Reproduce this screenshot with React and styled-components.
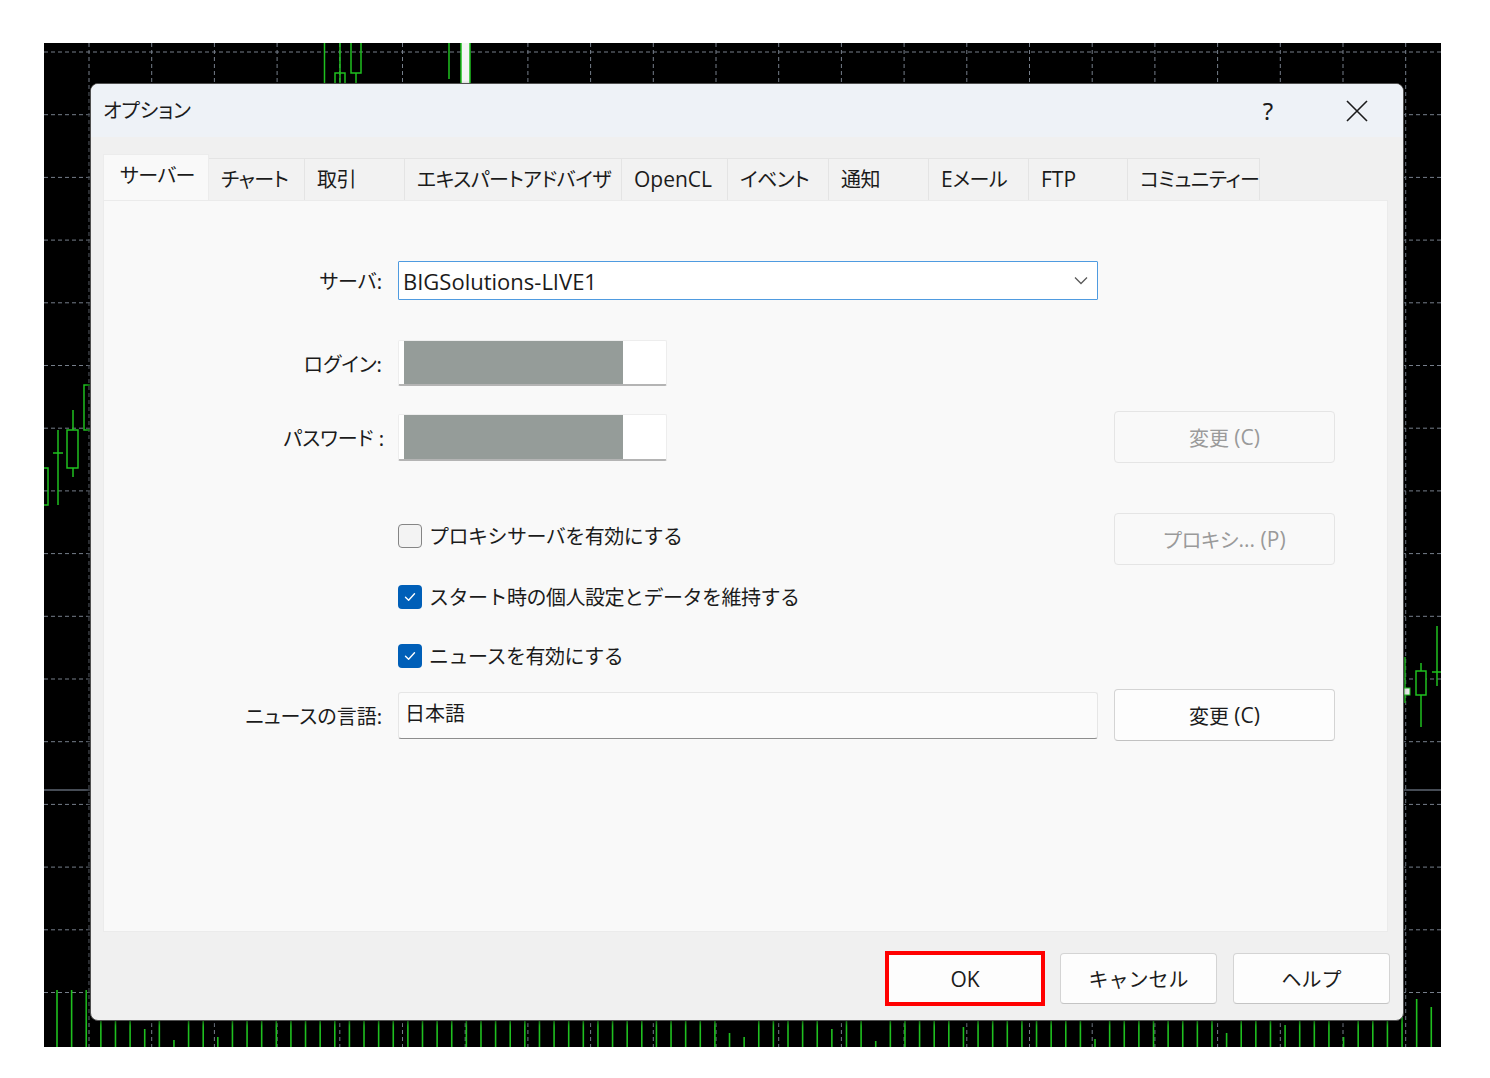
import React from "react";
import styled, { createGlobalStyle } from "styled-components";

const GlobalStyle = createGlobalStyle`
  html, body { margin: 0; padding: 0; background: #ffffff; }
  body { font-family: "Noto Sans", "Noto Sans CJK JP", sans-serif; color: #1b1b1b; }
  * { box-sizing: border-box; }
`;

const Page = styled.div`
  width: 1490px;
  height: 1078px;
  padding: 43px 0 0 44px;
`;

const Stage = styled.div`
  display: grid;
  width: 1397px;
  height: 1004px;
  background: #000;
  & > * { grid-area: 1 / 1; }
`;

const ChartSvg = styled.svg`
  display: block;
  width: 1397px;
  height: 1004px;
`;

const Dialog = styled.div`
  margin: 40px 37px 26px 46px;
  display: flex;
  flex-direction: column;
  background: #f0f0f0;
  border: 1px solid #505050;
  border-radius: 8px;
  overflow: hidden;
  box-shadow: -1px 2px 4px rgba(0, 0, 0, 0.6);
`;

const Latin = styled.span`
  font-family: "Open Sans", "Noto Sans", sans-serif;
  font-size: ${(p) => p.$size || 21}px;
  letter-spacing: 0;
`;

const TitleBar = styled.div`
  height: 53px;
  flex: none;
  display: flex;
  align-items: center;
  justify-content: space-between;
  padding: 0 23px 0 12px;
  background: #eef2f7;
`;

const Title = styled.div`
  font-size: 20px;
  font-feature-settings: "palt";
  color: #1b1b1b;
  margin-top: -2px;
`;

const TitleControls = styled.div`
  display: flex;
  align-items: center;
  gap: 43px;
`;

const TitleButton = styled.div`
  width: 46px;
  height: 40px;
  display: flex;
  align-items: center;
  justify-content: center;
  font-size: 24px;
  color: #1b1b1b;
`;

const Body = styled.div`
  flex: 1;
  display: flex;
  flex-direction: column;
  padding: 17px 15px 0 12px;
`;

const TabStrip = styled.div`
  display: flex;
  align-items: flex-end;
  height: 46px;
  flex: none;
`;

const Tab = styled.div`
  width: ${(p) => p.$w}px;
  height: ${(p) => (p.$active ? 46 : 42)}px;
  padding: ${(p) => (p.$active ? "0 0 6px 16px" : "0 0 2px 12px")};
  display: flex;
  align-items: center;
  font-size: 20px;
  font-feature-settings: "palt";
  letter-spacing: -0.5px;
  white-space: nowrap;
  color: #1b1b1b;
  background: ${(p) => (p.$active ? "#f9f9f9" : "#f2f2f2")};
  border: 1px solid ${(p) => (p.$active ? "#ececec" : "#e4e4e4")};
  border-bottom: none;
  margin-left: ${(p) => (p.$first ? 0 : -1)}px;
  position: relative;
  z-index: ${(p) => (p.$active ? 1 : 0)};
`;

const Panel = styled.div`
  height: 732px;
  flex: none;
  background: #f9f9f9;
  border: 1px solid #ebebeb;
  padding-top: 60px;
  display: flex;
  flex-direction: column;
`;

const Row = styled.div`
  display: grid;
  grid-template-columns: 278px 700px 221px;
  column-gap: 16px;
  align-items: center;
  height: ${(p) => p.$h}px;
  margin-top: ${(p) => p.$mt}px;
`;

const Label = styled.div`
  font-size: 20px;
  text-align: right;
  font-feature-settings: "palt";
  color: #1b1b1b;
  white-space: nowrap;
  margin-right: ${(p) => p.$mr || 0}px;
`;

const Combo = styled.div`
  height: 39px;
  display: flex;
  align-items: center;
  justify-content: space-between;
  padding: 0 9px 0 4px;
  background: #ffffff;
  border: 1px solid #4f9be0;
  border-radius: 1px;
`;

const MaskedField = styled.div`
  width: 269px;
  height: ${(p) => p.$h}px;
  display: flex;
  background: #ffffff;
  border: 1px solid #ededed;
  border-bottom: 2px solid #b4b4b4;
  border-radius: 2px;
  padding-left: 5px;
`;

const Redaction = styled.div`
  width: 219px;
  height: 100%;
  background: #959c99;
`;

const TextField = styled.div`
  height: 47px;
  display: flex;
  align-items: center;
  padding: 0 0 5px 6px;
  background: #fbfbfb;
  border: 1px solid #e6e6e6;
  border-bottom: 1px solid #8d8d8d;
  border-radius: 3px;
  font-size: 20px;
`;

const SideButton = styled.div`
  height: 52px;
  display: flex;
  align-items: center;
  justify-content: center;
  white-space: pre;
  font-size: 20px;
  font-feature-settings: "palt";
  border-radius: 4px;
  color: ${(p) => (p.$disabled ? "#9a9a9a" : "#1b1b1b")};
  background: ${(p) => (p.$disabled ? "#f9f9f9" : "#fdfdfd")};
  border: 1px solid ${(p) => (p.$disabled ? "#e5e5e5" : "#d4d4d4")};
  border-bottom-color: ${(p) => (p.$disabled ? "#e5e5e5" : "#c2c2c2")};
`;

const CheckLine = styled.div`
  display: flex;
  align-items: center;
  gap: 7px;
  font-size: 20px;
  letter-spacing: -0.5px;
  white-space: nowrap;
  align-self: ${(p) => (p.$top ? "start" : "center")};
  margin-top: ${(p) => p.$top || 0}px;
`;

const Box = styled.div`
  width: 24px;
  height: 24px;
  flex: none;
  border-radius: 4px;
  display: flex;
  align-items: center;
  justify-content: center;
  background: ${(p) => (p.$checked ? "#005fb8" : "#f3f3f3")};
  border: ${(p) => (p.$checked ? "none" : "1.5px solid #858585")};
`;

const Footer = styled.div`
  display: flex;
  justify-content: flex-end;
  align-items: center;
  gap: 15px;
  padding-top: 19px;
  margin-right: -2px;
`;

const DialogButton = styled.div`
  width: ${(p) => (p.$highlight ? 160 : 157)}px;
  height: ${(p) => (p.$highlight ? 55 : 51)}px;
  display: flex;
  align-items: center;
  justify-content: center;
  font-size: 20px;
  color: #1b1b1b;
  background: #fdfdfd;
  border: ${(p) => (p.$highlight ? "4px solid #ff0000" : "1px solid #d4d4d4")};
  border-bottom-color: ${(p) => (p.$highlight ? "#ff0000" : "#c4c4c4")};
  border-radius: ${(p) => (p.$highlight ? 0 : 4)}px;
  margin-left: ${(p) => p.$ml || 0}px;
`;

const Check = () => (
  <svg width="14" height="14" viewBox="0 0 14 14">
    <path d="M2.5 7.3 L5.6 10.2 L11.5 3.8" fill="none" stroke="#fff" strokeWidth="1.4" strokeLinecap="round" strokeLinejoin="round" />
  </svg>
);

const Chevron = () => (
  <svg width="14" height="9" viewBox="0 0 14 9">
    <path d="M1 1.5 L7 7.5 L13 1.5" fill="none" stroke="#5a5a5a" strokeWidth="1.3" />
  </svg>
);

const CloseIcon = () => (
  <svg width="22" height="22" viewBox="0 0 22 22">
    <path d="M1 1 L21 21 M21 1 L1 21" stroke="#1b1b1b" strokeWidth="1.6" />
  </svg>
);

const GREEN = "#1fc01f";
const GRID = "#767e8a";

const volHeights = (() => {
  const arr = [];
  const shortSet = { 6: 18, 8: 7, 11: 10, 46: 14, 47: 10, 53: 18, 56: 6, 62: 20, 71: 8, 80: 14, 84: 22, 88: 10 };
  for (let k = 0; k < 95; k++) {
    let h = 40;
    if (k < 3) h = 57;
    if (k === 92) h = 62;
    if (k === 93) h = 48;
    if (shortSet[k]) h = shortSet[k];
    arr.push(h);
  }
  return arr;
})();

function Chart() {
  const hLines = [];
  for (let n = 0; n < 16; n++) hLines.push(9 + 62.7 * n);
  const vLines = [];
  for (let n = 0; n < 22; n++) vLines.push(45 + 62.7 * n);
  return (
    <ChartSvg viewBox="0 0 1397 1004">
      {hLines.map((y) => (
        <line key={"h" + y} x1="0" x2="1397" y1={y} y2={y} stroke={GRID} strokeWidth="1" strokeDasharray="4 3" />
      ))}
      {vLines.map((x) => (
        <line key={"v" + x} x1={x} x2={x} y1="0" y2="1004" stroke={GRID} strokeWidth="1" strokeDasharray="4 3" />
      ))}
      <line x1="0" x2="1397" y1="747" y2="747" stroke="#5e6672" strokeWidth="1.5" />

      <line x1="280.5" x2="280.5" y1="0" y2="40" stroke={GREEN} strokeWidth="1.5" />
      <line x1="296" x2="296" y1="0" y2="40" stroke={GREEN} strokeWidth="1.5" />
      <rect x="291" y="30" width="10" height="12" fill="none" stroke={GREEN} strokeWidth="1.5" />
      <line x1="312" x2="312" y1="30" y2="40" stroke={GREEN} strokeWidth="1.5" />
      <rect x="307" y="-2" width="10" height="32" fill="none" stroke={GREEN} strokeWidth="1.5" />
      <line x1="405" x2="405" y1="0" y2="36" stroke={GREEN} strokeWidth="1.5" />
      <rect x="417" y="-2" width="9" height="44" fill="#f4f4f4" stroke={GREEN} strokeWidth="1.5" />

      <rect x="-2" y="425" width="6" height="37" fill="none" stroke={GREEN} strokeWidth="1.5" />
      <line x1="14" x2="14" y1="387" y2="462" stroke={GREEN} strokeWidth="1.5" />
      <line x1="9" x2="19" y1="410" y2="410" stroke={GREEN} strokeWidth="1.5" />
      <line x1="29" x2="29" y1="367" y2="434" stroke={GREEN} strokeWidth="1.5" />
      <rect x="23" y="387" width="11" height="38" fill="#000" stroke={GREEN} strokeWidth="1.5" />
      <rect x="40" y="342" width="10" height="45" fill="none" stroke={GREEN} strokeWidth="1.5" />

      <line x1="1361" x2="1361" y1="614" y2="660" stroke={GREEN} strokeWidth="1.5" />
      <rect x="1360" y="645" width="6" height="7" fill="#e8e8e8" stroke={GREEN} strokeWidth="1" />
      <line x1="1377" x2="1377" y1="620" y2="684" stroke={GREEN} strokeWidth="1.5" />
      <rect x="1372" y="628" width="10" height="24" fill="#000" stroke={GREEN} strokeWidth="1.5" />
      <line x1="1393" x2="1393" y1="583" y2="643" stroke={GREEN} strokeWidth="1.5" />
      <line x1="1388" x2="1398" y1="629" y2="629" stroke={GREEN} strokeWidth="1.5" />

      {volHeights.map((h, k) => {
        const x = 13 + 14.62 * k;
        return <line key={"b" + k} x1={x} x2={x} y1={1004 - h} y2="1004" stroke={GREEN} strokeWidth="1.6" />;
      })}
    </ChartSvg>
  );
}

const tabs = [
  { key: "server", label: "サーバー", w: 106, active: true },
  { key: "chart", label: "チャート", w: 97 },
  { key: "trade", label: "取引", w: 101 },
  { key: "ea", label: "エキスパートアドバイザ", w: 218 },
  { key: "opencl", label: <Latin>OpenCL</Latin>, w: 107 },
  { key: "event", label: "イベント", w: 102 },
  { key: "notify", label: "通知", w: 101 },
  { key: "mail", label: <><Latin>E</Latin>メール</>, w: 101 },
  { key: "ftp", label: <Latin>FTP</Latin>, w: 100 },
  { key: "community", label: "コミュニティー", w: 133 },
];

export default function App() {
  return (
    <>
      <GlobalStyle />
      <Page>
        <Stage>
          <Chart />
          <Dialog>
            <TitleBar>
              <Title>オプション</Title>
              <TitleControls>
                <TitleButton>?</TitleButton>
                <TitleButton>
                  <CloseIcon />
                </TitleButton>
              </TitleControls>
            </TitleBar>
            <Body>
              <TabStrip>
                {tabs.map((t, i) => (
                  <Tab key={t.key} $w={t.w} $active={t.active} $first={i === 0}>
                    {t.label}
                  </Tab>
                ))}
              </TabStrip>
              <Panel>
                <Row $h={39} $mt={0}>
                  <Label>サーバ:</Label>
                  <Combo>
                    <Latin $size={22}>BIGSolutions-LIVE1</Latin>
                    <Chevron />
                  </Combo>
                </Row>
                <Row $h={46} $mt={40}>
                  <Label>ログイン:</Label>
                  <MaskedField $h={46}>
                    <Redaction />
                  </MaskedField>
                </Row>
                <Row $h={52} $mt={25}>
                  <Label $mr={-2}>パスワード :</Label>
                  <MaskedField $h={47}>
                    <Redaction />
                  </MaskedField>
                  <SideButton $disabled>
                    <span>変更 </span>
                    <Latin>(C)</Latin>
                  </SideButton>
                </Row>
                <Row $h={52} $mt={50}>
                  <span />
                  <CheckLine $top={8}>
                    <Box />
                    プロキシサーバを有効にする
                  </CheckLine>
                  <SideButton $disabled>
                    <span>プロキシ</span>
                    <Latin>... (P)</Latin>
                  </SideButton>
                </Row>
                <Row $h={24} $mt={17}>
                  <span />
                  <CheckLine>
                    <Box $checked>
                      <Check />
                    </Box>
                    スタート時の個人設定とデータを維持する
                  </CheckLine>
                </Row>
                <Row $h={24} $mt={35}>
                  <span />
                  <CheckLine>
                    <Box $checked>
                      <Check />
                    </Box>
                    ニュースを有効にする
                  </CheckLine>
                </Row>
                <Row $h={52} $mt={24}>
                  <Label>ニュースの言語:</Label>
                  <TextField>日本語</TextField>
                  <SideButton>
                    <span>変更 </span>
                    <Latin>(C)</Latin>
                  </SideButton>
                </Row>
              </Panel>
              <Footer>
                <DialogButton $highlight>
                  <Latin>OK</Latin>
                </DialogButton>
                <DialogButton>キャンセル</DialogButton>
                <DialogButton $ml={1}>ヘルプ</DialogButton>
              </Footer>
            </Body>
          </Dialog>
        </Stage>
      </Page>
    </>
  );
}
